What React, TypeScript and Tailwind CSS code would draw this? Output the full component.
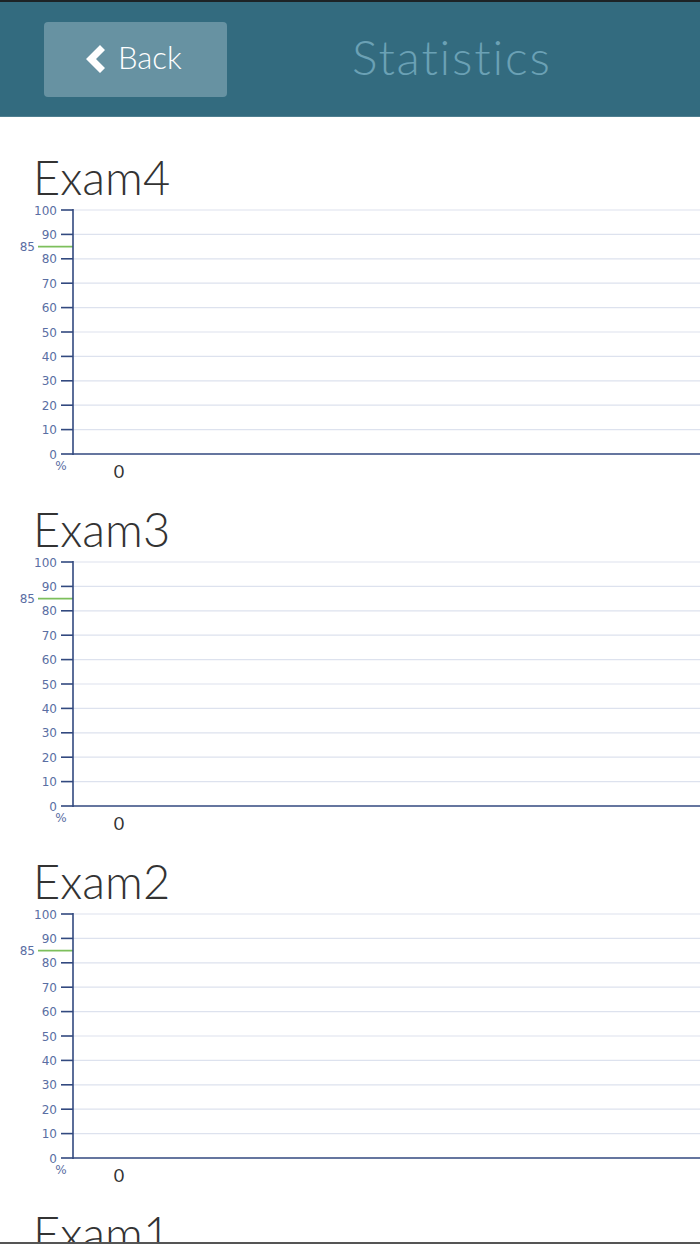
const exams = ['Exam4', 'Exam3', 'Exam2', 'Exam1'];
const ticks = [100, 90, 80, 70, 60, 50, 40, 30, 20, 10, 0];

// y positions inside the chart svg (0 line at 253, 100 line at 9)
const yFor = (v: number) => 253 - (v / 100) * 244;

function ExamChart() {
  return (
    <svg className="block w-full h-[282px]" style={{ fontFamily: '"DejaVu Sans", sans-serif' }}>
      {ticks.map((t) => (
        <g key={t}>
          {t > 0 && <line x1="73" x2="100%" y1={yFor(t)} y2={yFor(t)} stroke="#dde2ee" strokeWidth="1.2" />}
          <line x1="61" x2="73" y1={yFor(t)} y2={yFor(t)} stroke="#32497f" strokeWidth="1.6" />
          <text x="57" y={yFor(t) + 4.5} textAnchor="end" fontSize="12" fill="#5a6ea3">
            {t}
          </text>
        </g>
      ))}
      {/* target line */}
      <line x1="38" x2="73" y1={yFor(85)} y2={yFor(85)} stroke="#7dbf5c" strokeWidth="1.8" />
      <text x="35" y={yFor(85) + 4.5} textAnchor="end" fontSize="12" fill="#5a6ea3">
        85
      </text>
      {/* axes */}
      <line x1="73" x2="73" y1="8" y2="254" stroke="#32497f" strokeWidth="1.6" />
      <line x1="73" x2="100%" y1="253" y2="253" stroke="#32497f" strokeWidth="1.6" />
      <text x="61" y="269" textAnchor="middle" fontSize="12" fill="#5a6ea3">
        %
      </text>
      <text
        x="119"
        y="277"
        textAnchor="middle"
        fontSize="18"
        fill="#333333"
        style={{ fontFamily: 'Lato, sans-serif' }}
      >
        0
      </text>
    </svg>
  );
}

export default function App() {
  return (
    <div className="min-h-screen bg-white" style={{ fontFamily: 'Lato, "Open Sans", sans-serif' }}>
      {/* Header */}
      <header className="h-[117px] bg-[#336b7f] border-t-2 border-[#1d2326] border-b border-b-[#4f7f90] flex items-center">
        <button className="ml-[44px] mt-[1px] w-[183px] h-[75px] rounded-[4px] bg-[#6792a2] flex items-center pl-[42px] gap-[12px] text-white">
          <svg width="20" height="30" viewBox="0 0 20 30" className="-mt-[2px]">
            <polygon points="14,1 19,6 10,15 19,24 14,29 0,15" fill="#ffffff" />
          </svg>
          <span className="text-[31px] font-light leading-none -mt-[5px]">Back</span>
        </button>
        <h1 className="ml-[125px] -mt-[4px] text-[48px] font-light leading-none tracking-[1.8px] text-[#6ba1b5]">
          Statistics
        </h1>
      </header>

      {/* Exam charts */}
      <main className="pt-[14px]">
        {exams.map((name) => (
          <section key={name}>
            <div className="h-[70px] pt-[23px] pl-[33px]">
              <h2 className="text-[47px] font-light leading-none text-[#333333]">{name}</h2>
            </div>
            <ExamChart />
          </section>
        ))}
      </main>

      <div className="fixed bottom-0 left-0 right-0 h-[2px] bg-[#555555]" />
    </div>
  );
}
